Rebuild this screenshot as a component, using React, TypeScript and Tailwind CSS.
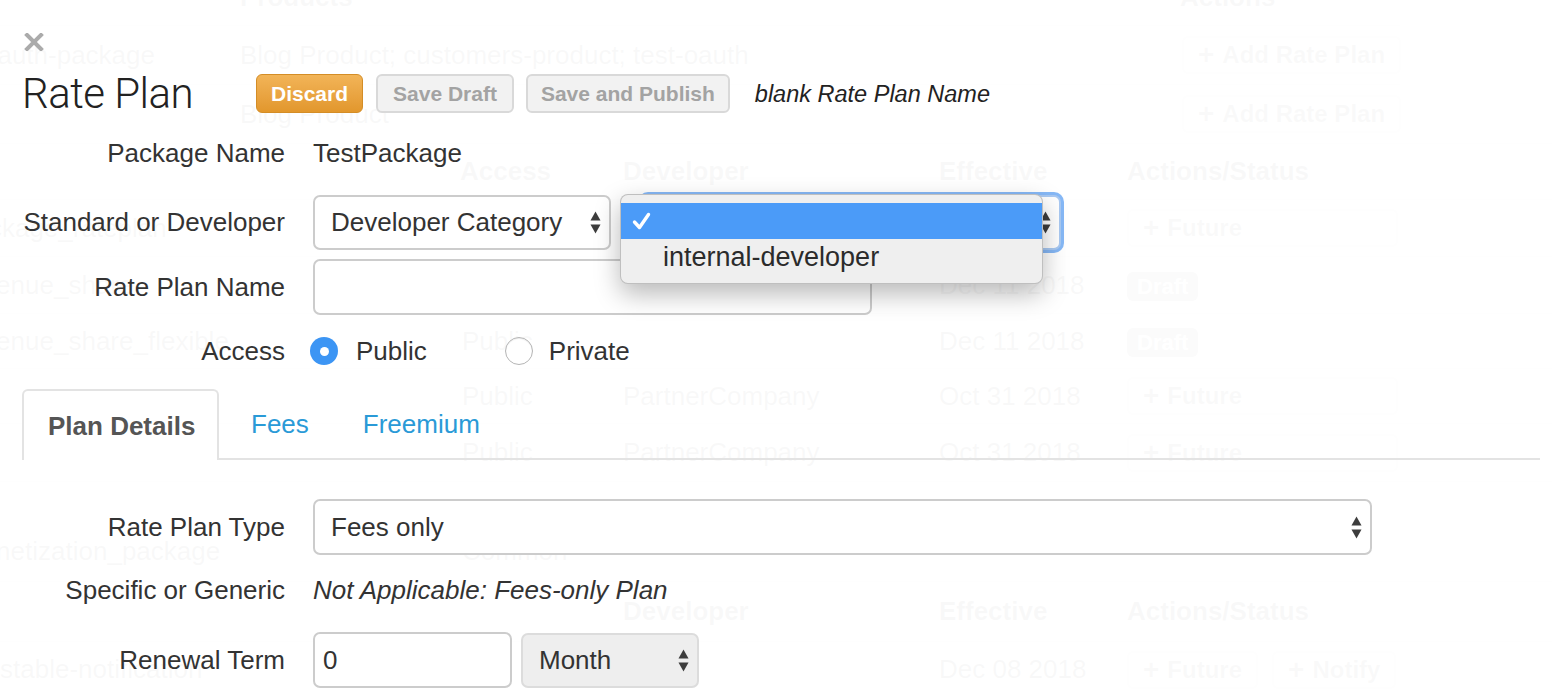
import React from 'react'

function Arrows() {
  return (
    <svg width="11" height="23" viewBox="0 0 11 23" className="shrink-0">
      <path d="M5.5 0.5 L10.5 9.5 H0.5 Z" fill="#3d3d3d" />
      <path d="M5.5 22.5 L10.5 13.5 H0.5 Z" fill="#3d3d3d" />
    </svg>
  )
}

function Row({ label, className, children }: { label: string; className: string; children: React.ReactNode }) {
  return (
    <div className={`flex items-center ${className}`}>
      <div className="w-[263px] shrink-0 text-right">{label}</div>
      <div className="ml-[28px] flex items-center">{children}</div>
    </div>
  )
}

function Radio({ checked }: { checked?: boolean }) {
  if (checked)
    return (
      <span className="flex h-[28px] w-[28px] shrink-0 items-center justify-center rounded-full bg-[#3c95f4]">
        <span className="h-[9px] w-[9px] rounded-full bg-white" />
      </span>
    )
  return <span className="block h-[28px] w-[28px] shrink-0 rounded-full border border-[#b5b5b5] bg-white shadow-[inset_0_1px_1px_rgba(0,0,0,0.08)]" />
}

function Ghost({ children }: { children: React.ReactNode }) {
  return (
    <span className="flex h-[38px] items-center gap-2 whitespace-nowrap rounded-[6px] border-2 border-[#ccc] px-[14px] text-[24px] font-bold text-[#555]">
      <span className="text-[28px] leading-none">+</span>
      {children}
    </span>
  )
}

function Draft() {
  return <span className="rounded-[6px] bg-[#777] px-[10px] py-[2px] text-[22px] font-bold text-white">Draft</span>
}

// faded page behind the modal
function BackgroundPage() {
  const row = 'grid grid-cols-[450px_161px_316px_188px_283px] items-center whitespace-nowrap border-b border-[#ddd]'
  return (
    <div className="text-[26px] text-[#333]">
      <div className="-mt-[30px] grid grid-cols-[225px_940px_235px] whitespace-nowrap border-b border-[#ddd]">
        <div className="h-[55px]" />
        <div className="flex h-[55px] items-center pl-[15px] font-bold">Products</div>
        <div className="flex h-[55px] items-center pl-[15px] font-bold">Actions</div>
        <div className="flex h-[59px] items-center justify-end border-t border-[#ddd] pr-[70px]">oauth-package</div>
        <div className="flex h-[59px] items-center border-t border-[#ddd] pl-[15px]">Blog Product; customers-product; test-oauth</div>
        <div className="flex h-[59px] items-center border-t border-[#ddd] pl-[17px]"><Ghost>Add Rate Plan</Ghost></div>
        <div className="flex h-[59px] items-center border-t border-[#ddd]" />
        <div className="flex h-[59px] items-center border-t border-[#ddd] pl-[15px]">Blog Product</div>
        <div className="flex h-[59px] items-center border-t border-[#ddd] pl-[17px]"><Ghost>Add Rate Plan</Ghost></div>
      </div>
      <div className={`${row} h-[56px] font-bold`}>
        <div />
        <div className="pl-[10px]">Access</div>
        <div className="pl-[12px]">Developer</div>
        <div className="pl-[12px]">Effective</div>
        <div className="pl-[12px]">Actions/Status</div>
      </div>
      <div className={`${row} h-[57px]`}>
        <div className="-ml-[40px]">package_rateplan</div><div /><div /><div />
        <div className="pl-[12px]"><Ghost>Future</Ghost></div>
      </div>
      <div className={`${row} h-[57px]`}>
        <div className="-ml-[40px]">revenue_share</div><div className="pl-[12px]">Public</div><div /><div className="pl-[12px]">Dec 11 2018</div>
        <div className="pl-[12px]"><Draft /></div>
      </div>
      <div className={`${row} h-[55px]`}>
        <div className="-ml-[40px]">revenue_share_flexible</div><div className="pl-[12px]">Public</div><div /><div className="pl-[12px]">Dec 11 2018</div>
        <div className="pl-[12px]"><Draft /></div>
      </div>
      <div className={`${row} h-[55px]`}>
        <div /><div className="pl-[12px]">Public</div><div className="pl-[12px]">PartnerCompany</div><div className="pl-[12px]">Oct 31 2018</div>
        <div className="pl-[12px]"><Ghost>Future</Ghost></div>
      </div>
      <div className={`${row} h-[58px]`}>
        <div /><div className="pl-[12px]">Public</div><div className="pl-[12px]">PartnerCompany</div><div className="pl-[12px]">Oct 31 2018</div>
        <div className="pl-[12px]"><Ghost>Future</Ghost></div>
      </div>
      <div className="h-[40px]" />
      <div className={`${row} h-[60px]`}>
        <div className="-ml-[40px]">monetization_package</div><div className="pl-[12px]">Common</div><div /><div /><div />
      </div>
      <div className={`${row} h-[60px] font-bold`}>
        <div /><div /><div className="pl-[12px]">Developer</div><div className="pl-[12px]">Effective</div><div className="pl-[12px]">Actions/Status</div>
      </div>
      <div className={`${row} h-[56px]`}>
        <div>stable-notification</div><div /><div /><div className="pl-[12px]">Dec 08 2018</div>
        <div className="flex gap-[14px] pl-[12px]"><Ghost>Future</Ghost><Ghost>Notify</Ghost></div>
      </div>
    </div>
  )
}

function RatePlanModal() {
  return (
    <div className="pl-[22px] pt-[33px] text-[26px] leading-[30px] text-[#333]">
      <svg width="20" height="18" viewBox="0 0 20 18" className="ml-[2px] block">
        <path d="M3 2 L17 16 M17 2 L3 16" stroke="#ababab" strokeWidth="4" strokeLinecap="square" />
      </svg>

      <div className="mt-[23px] flex h-[39px] items-center">
        <div className="w-[234px] shrink-0 font-['Roboto',sans-serif] text-[42px] font-light leading-[39px] tracking-[-0.5px] text-[#222]">
          Rate Plan
        </div>
        <button className="h-[39px] rounded-[6px] border border-[#d48d26] bg-gradient-to-b from-[#f2b457] to-[#e2972c] px-[14px] text-[21px] font-bold text-white">
          Discard
        </button>
        <button className="ml-[13px] h-[39px] rounded-[6px] border-2 border-[#d9d9d9] bg-[#f2f2f2] px-[15px] text-[21px] font-bold text-[#a3a3a3]">
          Save Draft
        </button>
        <button className="ml-[12px] h-[39px] rounded-[6px] border-2 border-[#d9d9d9] bg-[#f2f2f2] px-[13px] text-[21px] font-bold text-[#a3a3a3]">
          Save and Publish
        </button>
        <span className="ml-[25px] text-[23.5px] italic text-[#222]">blank Rate Plan Name</span>
      </div>

      <Row label="Package Name" className="mt-[25px] h-[30px]">
        <span>TestPackage</span>
      </Row>

      <Row label="Standard or Developer" className="mt-[26px] h-[56px]">
        <div className="flex h-[55px] w-[298px] items-center justify-between rounded-[7px] border-2 border-[#ccc] bg-white pl-[16px] pr-[8px]">
          <span>Developer Category</span>
          <Arrows />
        </div>
        <div className="relative ml-[30px]">
          <div className="flex h-[55px] w-[420px] items-center justify-end rounded-[7px] border-2 border-[#a9c9f2] bg-white pr-[8px] shadow-[0_0_0_3px_#86b8f6]">
            <Arrows />
          </div>
          <div className="absolute -left-[21px] -top-[1px] w-[423px] rounded-[8px] border border-black/20 bg-[#efefef] py-[8px] shadow-[0_10px_26px_rgba(0,0,0,0.28)]">
            <div className="flex h-[36px] items-center bg-[#4b9bf8] pl-[11px]">
              <svg width="19" height="18" viewBox="0 0 19 18">
                <path d="M2.5 10 L7.5 15.5 L16.5 2.5" fill="none" stroke="#fff" strokeWidth="3.4" strokeLinecap="round" strokeLinejoin="round" />
              </svg>
            </div>
            <div className="flex h-[36px] items-center pl-[42px] text-[27px] text-[#2b2b2b]">internal-developer</div>
          </div>
        </div>
      </Row>

      <Row label="Rate Plan Name" className="mt-[9px] h-[56px]">
        <div className="h-[56px] w-[559px] rounded-[7px] border-2 border-[#ccc] bg-white" />
      </Row>

      <Row label="Access" className="mt-[21px] h-[30px]">
        <div className="-ml-[3px] flex items-center">
          <Radio checked />
          <span className="ml-[18px]">Public</span>
          <div className="ml-[78px]"><Radio /></div>
          <span className="ml-[16px]">Private</span>
        </div>
      </Row>

      <div className="mt-[23px] flex h-[71px] w-[1518px] items-stretch border-b-2 border-[#e3e3e3]">
        <div className="-mb-[2px] flex w-[197px] items-center rounded-t-[6px] border-2 border-b-0 border-[#e3e3e3] bg-white pl-[24px] font-bold text-[#555]">
          Plan Details
        </div>
        <div className="ml-[32px] flex items-center text-[#2a9ad7]">Fees</div>
        <div className="ml-[54px] flex items-center text-[#2a9ad7]">Freemium</div>
      </div>

      <Row label="Rate Plan Type" className="mt-[39px] h-[56px]">
        <div className="flex h-[56px] w-[1059px] items-center justify-between rounded-[7px] border-2 border-[#ccc] bg-white pl-[16px] pr-[8px]">
          <span>Fees only</span>
          <Arrows />
        </div>
      </Row>

      <Row label="Specific or Generic" className="mt-[20px] h-[30px]">
        <span className="italic">Not Applicable: Fees-only Plan</span>
      </Row>

      <Row label="Renewal Term" className="mt-[27px] h-[56px]">
        <div className="flex h-[56px] w-[199px] items-center rounded-[7px] border-2 border-[#ccc] bg-white pl-[8px]">0</div>
        <div className="ml-[9px] flex h-[55px] w-[178px] items-center justify-between rounded-[7px] border-2 border-[#dcdcdc] bg-[#eeeeee] pl-[16px] pr-[8px]">
          <span>Month</span>
          <Arrows />
        </div>
      </Row>
    </div>
  )
}

export default function App() {
  return (
    <div className="relative h-[690px] w-full overflow-hidden bg-white font-['Liberation_Sans',Arial,sans-serif]">
      <BackgroundPage />
      <div className="absolute inset-0 bg-white/[0.97]">
        <RatePlanModal />
      </div>
    </div>
  )
}
